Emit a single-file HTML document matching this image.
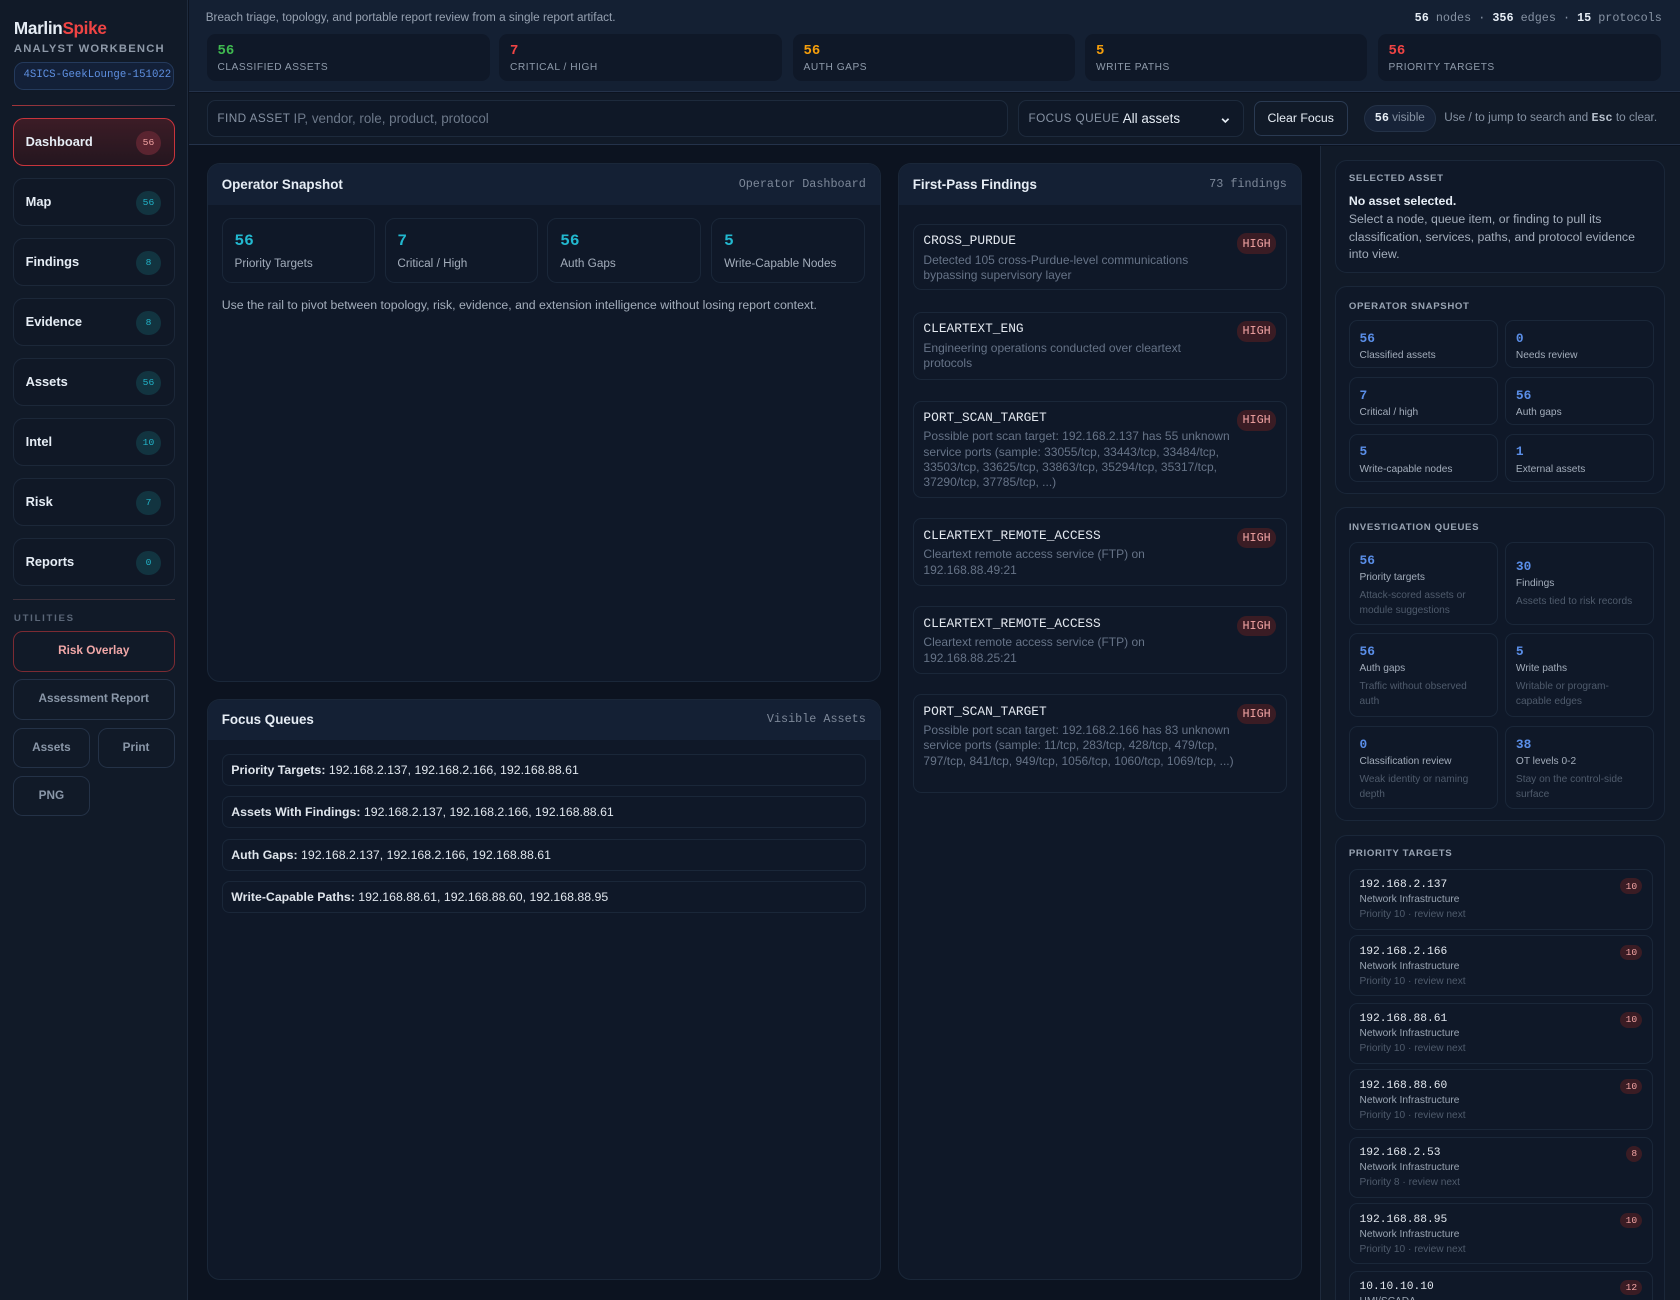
<!DOCTYPE html>
<html><head><meta charset="utf-8"><style>
html{zoom:1.07143;background:#0c1320;overflow:hidden}
*{box-sizing:border-box;margin:0;padding:0}
body{width:1568px;height:1213px;overflow:hidden;background:#0c1320;font-family:"Liberation Sans",sans-serif;color:#e6edf5;position:relative}
.a{position:absolute}
.mono{font-family:"Liberation Mono",monospace}
#side{left:0;top:0;width:175px;height:1214px;background:#111a28;border-right:1px solid #1f2b3d}
.nav{position:absolute;left:12px;width:151px;height:45px;border:1px solid #1c2839;border-radius:10px;background:#101826}
.nav b{position:absolute;left:11px;top:14px;font-size:12px;color:#e6edf5}
.nav i{position:absolute;right:12px;top:11px;width:23px;height:23px;border-radius:50%;background:#123440;color:#22b3c8;font-style:normal;font-family:"Liberation Mono",monospace;font-size:9px;text-align:center;line-height:23px}
.btn{position:absolute;border:1px solid #243247;border-radius:9px;color:#8a97a8;font-size:11px;text-align:center;font-weight:bold}
.stat{top:32px;height:44px;background:#0f1828;border-radius:8px;position:absolute}
.stat b{position:absolute;left:10px;top:8px;font-family:"Liberation Mono",monospace;font-size:13px}
.stat span{position:absolute;left:10px;top:26px;font-size:9.5px;color:#8f9bab;letter-spacing:.5px}
.panel{position:absolute;background:#0f1828;border:1px solid #1a2739;border-radius:12px;overflow:hidden}
.ph{height:38px;background:#142034;position:relative}
.ph b{position:absolute;left:13px;top:12px;font-size:12.5px}
.ph span{position:absolute;right:13px;top:12px;font-family:"Liberation Mono",monospace;font-size:11px;color:#7d8899}
.sc{position:absolute;top:51px;width:143px;height:60px;border:1px solid #1a2739;border-radius:9px}
.sc b{position:absolute;left:11px;top:12px;font-size:15px;color:#22b8cf;font-weight:bold;font-family:"Liberation Mono",monospace}
.sc span{position:absolute;left:11px;top:35px;font-size:11px;color:#a3adbb}
.fi{position:absolute;left:13px;width:349px;border:1px solid #1a2739;border-radius:8px}
.fi b{position:absolute;left:9px;top:8px;font-family:"Liberation Mono",monospace;font-weight:normal;font-size:12px;color:#e3e8ef}
.fi i{position:absolute;right:9px;top:8px;background:#3a1c24;color:#f2a3a3;font-style:normal;font-family:"Liberation Mono",monospace;font-size:11px;padding:3px 5px;border-radius:9px}
.fi p{position:absolute;left:9px;top:26px;width:262px;font-size:11.2px;line-height:14.3px;color:#667387}
.fq{position:absolute;left:13px;width:601px;height:30px;border:1px solid #1a2739;border-radius:7px;font-size:11.5px;line-height:28px;padding-left:8px;color:#dfe5ec}
.rc{position:absolute;left:1246px;width:308px;background:#0f1828;border:1px solid #1a2739;border-radius:11px}
.rh{position:absolute;left:12px;font-size:9px;font-weight:bold;letter-spacing:.6px;color:#99a4b3}
.mc{position:absolute;width:139px;border:1px solid #1a2739;border-radius:8px}
.mc b{position:absolute;left:9px;font-family:"Liberation Mono",monospace;font-size:12px;color:#5a8ee8}
.mc span{position:absolute;left:9px;font-size:9.5px;color:#a3adbb}
.mc em{position:absolute;left:9px;font-style:normal;font-size:9.5px;color:#4f5b6c;line-height:14px;width:112px}
.pt{position:absolute;left:12px;width:284px;height:57px;border:1px solid #1a2739;border-radius:8px}
.pt b{position:absolute;left:9px;top:9px;font-family:"Liberation Mono",monospace;font-weight:normal;font-size:10.5px;color:#e3e8ef}
.pt span{position:absolute;left:9px;top:23px;font-size:9.5px;color:#9aa5b3}
.pt em{position:absolute;left:9px;top:37px;font-size:9.5px;color:#4f5b6c;font-style:normal}
.pt i{position:absolute;right:9px;top:8px;background:#3a1c24;color:#f2a3a3;font-style:normal;font-family:"Liberation Mono",monospace;font-size:9px;padding:2px 5px;border-radius:8px}
</style></head><body>
<div id="side" class="a">
 <div class="a" style="left:13px;top:17px;font-size:16px;font-weight:bold;letter-spacing:-.3px">Marlin<span style="color:#ef4444">Spike</span></div>
 <div class="a" style="left:13px;top:40px;font-size:10.5px;font-weight:bold;letter-spacing:1.1px;color:#8e99a8">ANALYST WORKBENCH</div>
 <div class="a mono" style="left:13px;top:58px;width:149px;height:26px;border:1px solid #243a5c;background:#132038;border-radius:9px;font-size:10px;color:#5e8fe0;line-height:24px;padding-left:8px;overflow:hidden;white-space:nowrap">4SICS-GeekLounge-151022</div>
 <div class="a" style="left:11px;top:98px;width:152px;height:1px;background:linear-gradient(90deg,#a3343a,#2a3547)"></div>
 <div class="nav" style="top:110px;background:linear-gradient(180deg,#3c1c26,#24161f);border-color:#c8343c"><b>Dashboard</b><i style="background:#5a2430;color:#f2a3a3">56</i></div>
 <div class="nav" style="top:166px"><b>Map</b><i>56</i></div>
 <div class="nav" style="top:222px"><b>Findings</b><i>8</i></div>
 <div class="nav" style="top:278px"><b>Evidence</b><i>8</i></div>
 <div class="nav" style="top:334px"><b>Assets</b><i>56</i></div>
 <div class="nav" style="top:390px"><b>Intel</b><i>10</i></div>
 <div class="nav" style="top:446px"><b>Risk</b><i>7</i></div>
 <div class="nav" style="top:502px"><b>Reports</b><i>0</i></div>
 <div class="a" style="left:12px;top:559px;width:151px;height:1px;background:#3a2f3a"></div>
 <div class="a" style="left:13px;top:572px;font-size:9px;font-weight:bold;letter-spacing:1.6px;color:#5b6778">UTILITIES</div>
 <div class="btn" style="left:12px;top:589px;width:151px;height:38px;line-height:36px;border-color:#7c2b33;color:#f0a7a7">Risk Overlay</div>
 <div class="btn" style="left:12px;top:634px;width:151px;height:38px;line-height:36px">Assessment Report</div>
 <div class="btn" style="left:12px;top:679px;width:72px;height:38px;line-height:36px">Assets</div>
 <div class="btn" style="left:91px;top:679px;width:72px;height:38px;line-height:36px">Print</div>
 <div class="btn" style="left:12px;top:724px;width:72px;height:38px;line-height:36px">PNG</div>
</div>

<div class="a" style="left:176px;top:0;width:1392px;height:86px;background:#142033;border-bottom:1px solid #24324a"></div>
<div class="a" style="left:192px;top:10px;font-size:11px;color:#96a1b1">Breach triage, topology, and portable report review from a single report artifact.</div>
<div class="a mono" style="right:17px;top:10px;font-size:11px;color:#8692a3"><b style="color:#e6edf5">56</b> nodes · <b style="color:#e6edf5">356</b> edges · <b style="color:#e6edf5">15</b> protocols</div>
<div class="stat" style="left:193px;width:264px"><b style="color:#3fb950">56</b><span>CLASSIFIED ASSETS</span></div>
<div class="stat" style="left:466px;width:264px"><b style="color:#ef4444">7</b><span>CRITICAL / HIGH</span></div>
<div class="stat" style="left:740px;width:263px"><b style="color:#f59e0b">56</b><span>AUTH GAPS</span></div>
<div class="stat" style="left:1013px;width:263px"><b style="color:#f59e0b">5</b><span>WRITE PATHS</span></div>
<div class="stat" style="left:1286px;width:264px"><b style="color:#ef4444">56</b><span>PRIORITY TARGETS</span></div>

<div class="a" style="left:176px;top:87px;width:1392px;height:48px;background:#111a28;border-bottom:1px solid #24324a"></div>
<div class="a" style="left:193px;top:93px;width:748px;height:35px;border:1px solid #1d2a3c;border-radius:8px;background:#0f1827"><span class="a" style="left:9px;top:11px;font-size:11px;color:#8692a3;letter-spacing:.4px">FIND ASSET</span><span class="a" style="left:80px;top:10px;font-size:12.5px;color:#6c7889">IP, vendor, role, product, protocol</span></div>
<div class="a" style="left:950px;top:93px;width:211px;height:35px;border:1px solid #1d2a3c;border-radius:8px;background:#0f1827"><span class="a" style="left:9px;top:11px;font-size:11px;color:#8692a3;letter-spacing:.4px">FOCUS QUEUE</span><span class="a" style="left:97px;top:10px;font-size:12.5px;color:#e6edf5">All assets</span><svg class="a" style="left:188px;top:13px" width="10" height="10" viewBox="0 0 10 10"><path d="M2 3.5L5 6.5L8 3.5" stroke="#e6edf5" stroke-width="1.6" fill="none"/></svg></div>
<div class="a" style="left:1170px;top:94px;width:88px;height:33px;border:1px solid #2a3a52;border-radius:7px;font-size:11.5px;text-align:center;line-height:31px;color:#e6edf5">Clear Focus</div>
<div class="a" style="left:1273px;top:98px;width:67px;height:25px;border:1px solid #243247;border-radius:13px;background:#172338;font-size:11px;text-align:center;line-height:23px;color:#8692a3"><b class="mono" style="color:#e6edf5">56</b> visible</div>
<div class="a" style="left:1348px;top:104px;font-size:11px;color:#8692a3">Use / to jump to search and <b class="mono" style="color:#b8c1cd">Esc</b> to clear.</div>

<div class="panel" style="left:193px;top:152px;width:629px;height:485px">
 <div class="ph"><b>Operator Snapshot</b><span>Operator Dashboard</span></div>
 <div class="sc" style="left:13px"><b>56</b><span>Priority Targets</span></div>
 <div class="sc" style="left:165px"><b>7</b><span>Critical / High</span></div>
 <div class="sc" style="left:317px"><b>56</b><span>Auth Gaps</span></div>
 <div class="sc" style="left:470px"><b>5</b><span>Write-Capable Nodes</span></div>
 <div class="a" style="left:13px;top:125px;font-size:11.5px;color:#a3adbb">Use the rail to pivot between topology, risk, evidence, and extension intelligence without losing report context.</div>
</div>
<div class="panel" style="left:193px;top:652px;width:629px;height:543px">
 <div class="ph"><b>Focus Queues</b><span>Visible Assets</span></div>
 <div class="fq" style="top:51px"><b>Priority Targets:</b> 192.168.2.137, 192.168.2.166, 192.168.88.61</div>
 <div class="fq" style="top:90px"><b>Assets With Findings:</b> 192.168.2.137, 192.168.2.166, 192.168.88.61</div>
 <div class="fq" style="top:130px"><b>Auth Gaps:</b> 192.168.2.137, 192.168.2.166, 192.168.88.61</div>
 <div class="fq" style="top:169px"><b>Write-Capable Paths:</b> 192.168.88.61, 192.168.88.60, 192.168.88.95</div>
</div>
<div class="panel" style="left:838px;top:152px;width:377px;height:1043px">
 <div class="ph"><b>First-Pass Findings</b><span>73 findings</span></div>
 <div class="fi" style="top:56px;height:62px"><b>CROSS_PURDUE</b><i>HIGH</i><p>Detected 105 cross-Purdue-level communications bypassing supervisory layer</p></div>
 <div class="fi" style="top:138px;height:64px"><b>CLEARTEXT_ENG</b><i>HIGH</i><p style="width:245px">Engineering operations conducted over cleartext protocols</p></div>
 <div class="fi" style="top:221px;height:91px"><b>PORT_SCAN_TARGET</b><i>HIGH</i><p style="width:295px">Possible port scan target: 192.168.2.137 has 55 unknown service ports (sample: 33055/tcp, 33443/tcp, 33484/tcp, 33503/tcp, 33625/tcp, 33863/tcp, 35294/tcp, 35317/tcp, 37290/tcp, 37785/tcp, ...)</p></div>
 <div class="fi" style="top:331px;height:63px"><b>CLEARTEXT_REMOTE_ACCESS</b><i>HIGH</i><p style="width:230px">Cleartext remote access service (FTP) on 192.168.88.49:21</p></div>
 <div class="fi" style="top:413px;height:63px"><b>CLEARTEXT_REMOTE_ACCESS</b><i>HIGH</i><p style="width:230px">Cleartext remote access service (FTP) on 192.168.88.25:21</p></div>
 <div class="fi" style="top:495px;height:92px"><b>PORT_SCAN_TARGET</b><i>HIGH</i><p style="width:290px">Possible port scan target: 192.168.2.166 has 83 unknown service ports (sample: 11/tcp, 283/tcp, 428/tcp, 479/tcp, 797/tcp, 841/tcp, 949/tcp, 1056/tcp, 1060/tcp, 1069/tcp, ...)</p></div>
</div>

<div class="a" style="left:1232px;top:136px;width:336px;height:1078px;background:#111a28;border-left:1px solid #1f2b3d"></div>
<div class="rc" style="top:149px;height:106px">
 <div class="rh" style="top:12px">SELECTED ASSET</div>
 <div class="a" style="left:12px;top:31px;font-size:11.5px;font-weight:bold">No asset selected.</div>
 <div class="a" style="left:12px;top:47px;width:272px;font-size:11.5px;line-height:16.5px;color:#a3adbb">Select a node, queue item, or finding to pull its classification, services, paths, and protocol evidence into view.</div>
</div>
<div class="rc" style="top:267px;height:194px">
 <div class="rh" style="top:13px">OPERATOR SNAPSHOT</div>
 <div class="mc" style="left:12px;top:31px;height:45px"><b style="top:9px">56</b><span style="top:27px">Classified assets</span></div>
 <div class="mc" style="left:158px;top:31px;height:45px"><b style="top:9px">0</b><span style="top:27px">Needs review</span></div>
 <div class="mc" style="left:12px;top:84px;height:45px"><b style="top:9px">7</b><span style="top:27px">Critical / high</span></div>
 <div class="mc" style="left:158px;top:84px;height:45px"><b style="top:9px">56</b><span style="top:27px">Auth gaps</span></div>
 <div class="mc" style="left:12px;top:137px;height:45px"><b style="top:9px">5</b><span style="top:27px">Write-capable nodes</span></div>
 <div class="mc" style="left:158px;top:137px;height:45px"><b style="top:9px">1</b><span style="top:27px">External assets</span></div>
</div>
<div class="rc" style="top:473px;height:293px">
 <div class="rh" style="top:13px">INVESTIGATION QUEUES</div>
 <div class="mc" style="left:12px;top:32px;height:77px"><b style="top:9px">56</b><span style="top:27px">Priority targets</span><em style="top:42px">Attack-scored assets or module suggestions</em></div>
 <div class="mc" style="left:158px;top:32px;height:77px"><b style="top:15px">30</b><span style="top:33px">Findings</span><em style="top:48px;width:125px">Assets tied to risk records</em></div>
 <div class="mc" style="left:12px;top:117px;height:78px"><b style="top:9px">56</b><span style="top:27px">Auth gaps</span><em style="top:42px">Traffic without observed auth</em></div>
 <div class="mc" style="left:158px;top:117px;height:78px"><b style="top:9px">5</b><span style="top:27px">Write paths</span><em style="top:42px">Writable or program-capable edges</em></div>
 <div class="mc" style="left:12px;top:204px;height:77px"><b style="top:9px">0</b><span style="top:27px">Classification review</span><em style="top:42px">Weak identity or naming depth</em></div>
 <div class="mc" style="left:158px;top:204px;height:77px"><b style="top:9px">38</b><span style="top:27px">OT levels 0-2</span><em style="top:42px">Stay on the control-side surface</em></div>
</div>
<div class="rc" style="top:779px;height:460px">
 <div class="rh" style="top:12px">PRIORITY TARGETS</div>
 <div class="pt" style="top:31px"><b>192.168.2.137</b><span>Network Infrastructure</span><em>Priority 10 · review next</em><i>10</i></div>
 <div class="pt" style="top:93px"><b>192.168.2.166</b><span>Network Infrastructure</span><em>Priority 10 · review next</em><i>10</i></div>
 <div class="pt" style="top:156px"><b>192.168.88.61</b><span>Network Infrastructure</span><em>Priority 10 · review next</em><i>10</i></div>
 <div class="pt" style="top:218px"><b>192.168.88.60</b><span>Network Infrastructure</span><em>Priority 10 · review next</em><i>10</i></div>
 <div class="pt" style="top:281px"><b>192.168.2.53</b><span>Network Infrastructure</span><em>Priority 8 · review next</em><i>8</i></div>
 <div class="pt" style="top:343px"><b>192.168.88.95</b><span>Network Infrastructure</span><em>Priority 10 · review next</em><i>10</i></div>
 <div class="pt" style="top:406px"><b>10.10.10.10</b><span>HMI/SCADA</span><em></em><i>12</i></div>
</div>
</body></html>
